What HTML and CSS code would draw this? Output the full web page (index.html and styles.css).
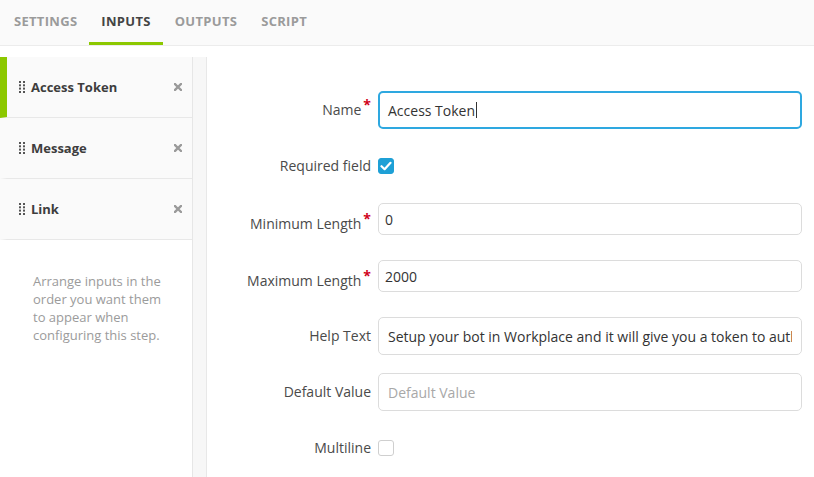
FILE: index.html
```html
<!DOCTYPE html>
<html>
<head>
<meta charset="utf-8">
<link rel="stylesheet" href="styles.css">
</head>
<body>
<div class="tabs">
  <div class="tab">SETTINGS</div>
  <div class="tab active">INPUTS</div>
  <div class="tab">OUTPUTS</div>
  <div class="tab">SCRIPT</div>
</div>
<div class="content">
  <aside class="sidebar">
    <div class="item active">
      <svg class="grip" width="6" height="12" viewBox="0 0 6 12"><g fill="#555"><rect x="0" y="0" width="2" height="2"/><rect x="4" y="0" width="2" height="2"/><rect x="0" y="3.3" width="2" height="2"/><rect x="4" y="3.3" width="2" height="2"/><rect x="0" y="6.6" width="2" height="2"/><rect x="4" y="6.6" width="2" height="2"/><rect x="0" y="10" width="2" height="2"/><rect x="4" y="10" width="2" height="2"/></g></svg>
      <span class="item-name">Access Token</span>
      <svg class="close" width="8" height="8" viewBox="0 0 8 8"><path d="M1 1L7 7M7 1L1 7" stroke="#9a9a9a" stroke-width="2.4" stroke-linecap="square"/></svg>
    </div>
    <div class="item">
      <svg class="grip" width="6" height="12" viewBox="0 0 6 12"><g fill="#555"><rect x="0" y="0" width="2" height="2"/><rect x="4" y="0" width="2" height="2"/><rect x="0" y="3.3" width="2" height="2"/><rect x="4" y="3.3" width="2" height="2"/><rect x="0" y="6.6" width="2" height="2"/><rect x="4" y="6.6" width="2" height="2"/><rect x="0" y="10" width="2" height="2"/><rect x="4" y="10" width="2" height="2"/></g></svg>
      <span class="item-name">Message</span>
      <svg class="close" width="8" height="8" viewBox="0 0 8 8"><path d="M1 1L7 7M7 1L1 7" stroke="#9a9a9a" stroke-width="2.4" stroke-linecap="square"/></svg>
    </div>
    <div class="item">
      <svg class="grip" width="6" height="12" viewBox="0 0 6 12"><g fill="#555"><rect x="0" y="0" width="2" height="2"/><rect x="4" y="0" width="2" height="2"/><rect x="0" y="3.3" width="2" height="2"/><rect x="4" y="3.3" width="2" height="2"/><rect x="0" y="6.6" width="2" height="2"/><rect x="4" y="6.6" width="2" height="2"/><rect x="0" y="10" width="2" height="2"/><rect x="4" y="10" width="2" height="2"/></g></svg>
      <span class="item-name">Link</span>
      <svg class="close" width="8" height="8" viewBox="0 0 8 8"><path d="M1 1L7 7M7 1L1 7" stroke="#9a9a9a" stroke-width="2.4" stroke-linecap="square"/></svg>
    </div>
    <p class="hint">Arrange inputs in the order you want them to appear when configuring this step.</p>
  </aside>
  <div class="gutter"></div>
  <main class="form">
    <div class="row row-name">
      <label class="label">Name<span class="req">*</span></label>
      <div class="field focused"><span>Access Token</span><span class="caret"></span></div>
    </div>
    <div class="row row-required">
      <label class="label">Required field</label>
      <span class="check checked"><svg width="12" height="10" viewBox="0 0 12 10"><path d="M1.5 5.2L4.6 8.2L10.5 1.8" fill="none" stroke="#fff" stroke-width="2.2" stroke-linecap="round" stroke-linejoin="round"/></svg></span>
    </div>
    <div class="row row-num row-min">
      <label class="label">Minimum Length<span class="req">*</span></label>
      <input class="input small" type="text" value="0" readonly>
    </div>
    <div class="row row-num row-max">
      <label class="label">Maximum Length<span class="req">*</span></label>
      <input class="input small" type="text" value="2000" readonly>
    </div>
    <div class="row row-help">
      <label class="label">Help Text</label>
      <input class="input" type="text" value="Setup your bot in Workplace and it will give you a token to authenticate with." readonly>
    </div>
    <div class="row row-default">
      <label class="label">Default Value</label>
      <input class="input" type="text" placeholder="Default Value" readonly>
    </div>
    <div class="row row-multi">
      <label class="label">Multiline</label>
      <span class="check"></span>
    </div>
  </main>
</div>
</body>
</html>
```
FILE: styles.css
```css
* { box-sizing: border-box; }
html, body { margin: 0; padding: 0; background: #fff; }
body {
  font-family: "Open Sans", "DejaVu Sans", sans-serif;
  color: #333;
  width: 814px;
  height: 477px;
  overflow: hidden;
}
.tabs {
  display: flex;
  height: 46px;
  padding-left: 2px;
  background: #fafafa;
  border-bottom: 1px solid #ececec;
}
.tab {
  padding: 0 12px;
  height: 45px;
  line-height: 42px;
  font-size: 13px;
  font-weight: 700;
  letter-spacing: 0.3px;
  color: #9b9b9b;
  border-bottom: 3px solid transparent;
}
.tab.active {
  color: #444;
  border-bottom-color: #8cc800;
}
.content {
  display: flex;
  margin-top: 11px;
  height: 420px;
}
.sidebar {
  width: 193px;
  flex: none;
  border-right: 1px solid #e6e6e6;
  padding-left: 1px;
}
.item {
  display: flex;
  align-items: center;
  height: 61px;
  padding: 0 10px 1px 12px;
  background: #fafafa;
  border-left: 7px solid transparent;
  border-bottom: 1px solid #e8e8e8;
  margin-left: -1px;
}
.item.active { border-left-color: #8cc800; }
.grip { flex: none; margin-right: 6px; }
.item-name {
  flex: 1;
  font-size: 13px;
  font-weight: 700;
  color: #3d3d3d;
}
.close { flex: none; }
.hint {
  margin: 0;
  padding: 32px 20px 0 32px;
  font-size: 13px;
  line-height: 18px;
  color: #9b9b9b;
}
.gutter {
  width: 14px;
  flex: none;
  background: #f7f7f7;
  border-right: 1px solid #e8e8e8;
}
.form {
  flex: 1;
  padding: 34px 12px 0 0;
  display: flex;
  flex-direction: column;
}
.row {
  display: flex;
  align-items: center;
}
.label {
  width: 164px;
  margin-right: 7px;
  text-align: right;
  font-size: 14px;
  color: #4a4a4a;
  line-height: 20px;
  flex: none;
}
.req {
  color: #d0021b;
  font-weight: 700;
  font-size: 14px;
  position: relative;
  top: -5px;
  margin-left: 2px;
}
.field, .input {
  flex: 1;
  height: 38px;
  border: 1px solid #dcdcdc;
  border-radius: 5px;
  font-family: inherit;
  font-size: 14px;
  color: #333;
  padding: 0 9px;
  background: #fff;
  outline: none;
  min-width: 0;
}
.input::placeholder { color: #a8a8a8; }
.field.focused {
  display: flex;
  align-items: center;
  border: 2px solid #2ea8e0;
  padding-left: 8px;
}
.caret {
  display: inline-block;
  width: 1px;
  height: 16px;
  background: #333;
  margin-left: 1px;
}
.input.small {
  height: 32px;
  padding-left: 6px;
}
.row-num { align-items: flex-start; }
.row-num .label { margin-top: 11px; }
.row-required { margin-top: 27px; }
.row-min { margin-top: 27px; }
.row-max { margin-top: 25px; }
.row-help { margin-top: 25px; }
.row-default { margin-top: 18px; }
.row-multi { margin-top: 27px; }
.check {
  width: 16px;
  height: 16px;
  border: 1px solid #cfcfcf;
  border-radius: 3px;
  background: #fff;
  display: flex;
  align-items: center;
  justify-content: center;
  flex: none;
}
.check.checked {
  background: #1ea0d6;
  border-color: #1ea0d6;
}
```
